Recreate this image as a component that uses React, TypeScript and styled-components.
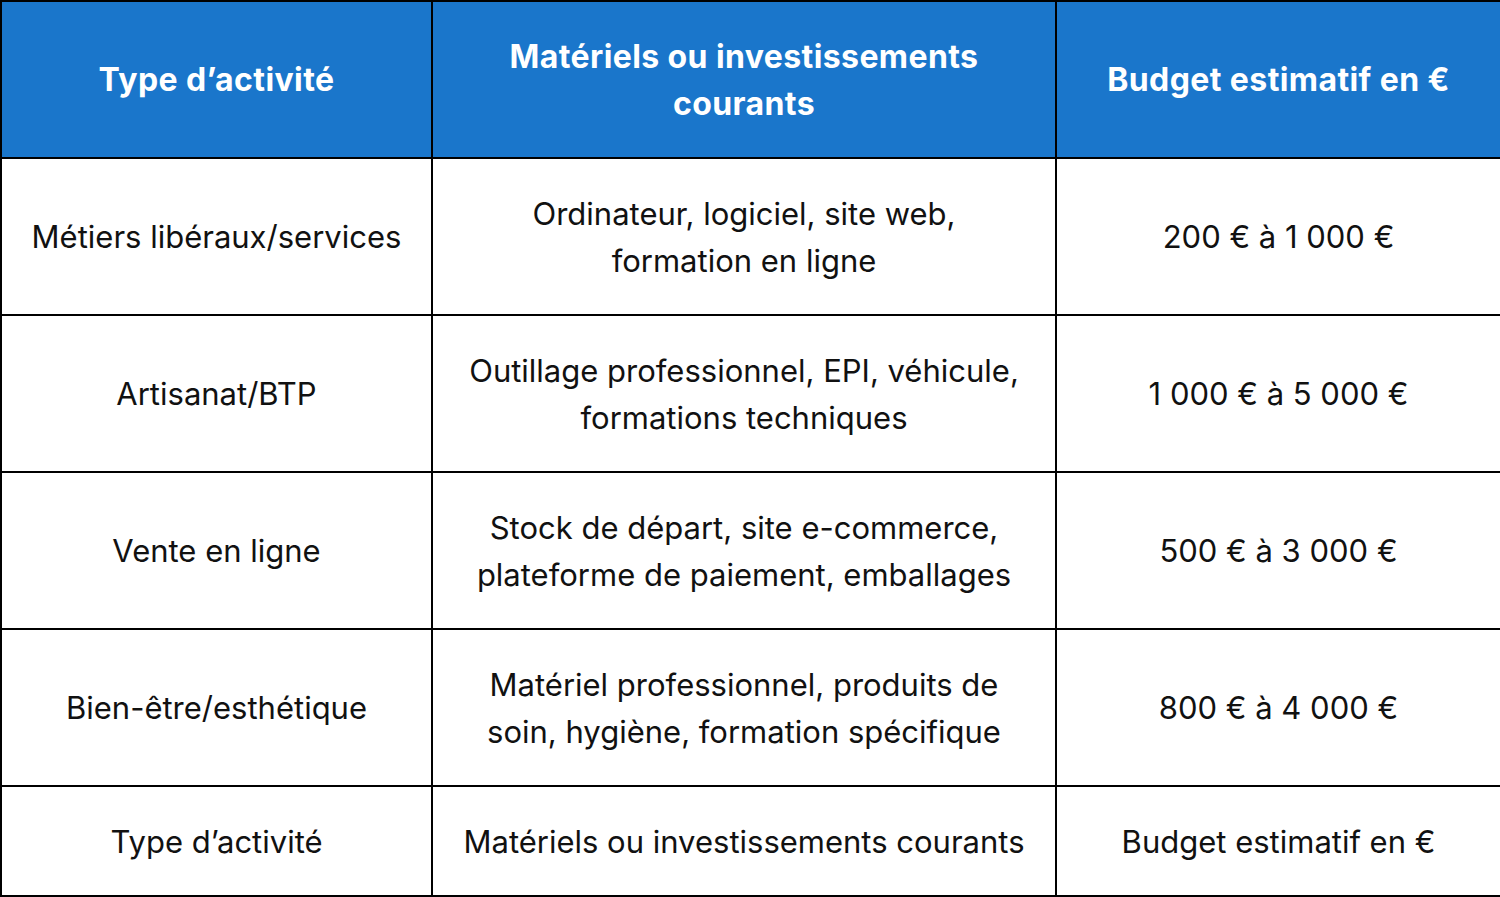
import React from "react";
import styled, { createGlobalStyle } from "styled-components";

const Global = createGlobalStyle`
  html, body { margin: 0; padding: 0; background: #ffffff; }
  body { font-family: "Inter", "Noto Sans", sans-serif; }
`;

const Table = styled.table`
  width: 1500px;
  border-collapse: collapse;
  table-layout: fixed;
  font-family: "Inter", "Noto Sans", sans-serif;
`;

const Col = styled.col<{ $w: number }>`
  width: ${(p) => p.$w}px;
`;

const HeadCell = styled.th`
  background: #1a76cb;
  color: #ffffff;
  font-weight: 700;
  font-size: 32px;
  line-height: 47px;
  letter-spacing: 0.4px;
  height: 155px;
  padding: 0 16px;
  border: 2px solid #000000;
  text-align: center;
  vertical-align: middle;
`;

const Row = styled.tr<{ $h: number }>`
  height: ${(p) => p.$h}px;
`;

const Cell = styled.td`
  color: #111111;
  font-weight: 400;
  font-size: 31px;
  line-height: 47px;
  letter-spacing: 0;
  padding: 0 12px;
  border: 2px solid #000000;
  text-align: center;
  vertical-align: middle;
`;

const rows: { h: number; cells: React.ReactNode[] }[] = [
  {
    h: 157,
    cells: [
      "Métiers libéraux/services",
      <>Ordinateur, logiciel, site web,<br />formation en ligne</>,
      "200 € à 1 000 €",
    ],
  },
  {
    h: 157,
    cells: [
      "Artisanat/BTP",
      <>Outillage professionnel, EPI, véhicule,<br />formations techniques</>,
      "1 000 € à 5 000 €",
    ],
  },
  {
    h: 157,
    cells: [
      "Vente en ligne",
      <>Stock de départ, site e-commerce,<br />plateforme de paiement, emballages</>,
      "500 € à 3 000 €",
    ],
  },
  {
    h: 157,
    cells: [
      "Bien-être/esthétique",
      <>Matériel professionnel, produits de<br />soin, hygiène, formation spécifique</>,
      "800 € à 4 000 €",
    ],
  },
  {
    h: 110,
    cells: ["Type d’activité", "Matériels ou investissements courants", "Budget estimatif en €"],
  },
];

export default function App() {
  return (
    <>
      <Global />
      <Table>
        <colgroup>
          <Col $w={431} />
          <Col $w={624} />
          <Col $w={445} />
        </colgroup>
        <thead>
          <tr>
            <HeadCell>Type d’activité</HeadCell>
            <HeadCell>
              Matériels ou investissements
              <br />
              courants
            </HeadCell>
            <HeadCell>Budget estimatif en €</HeadCell>
          </tr>
        </thead>
        <tbody>
          {rows.map((r, i) => (
            <Row key={i} $h={r.h}>
              {r.cells.map((c, j) => (
                <Cell key={j}>{c}</Cell>
              ))}
            </Row>
          ))}
        </tbody>
      </Table>
    </>
  );
}
